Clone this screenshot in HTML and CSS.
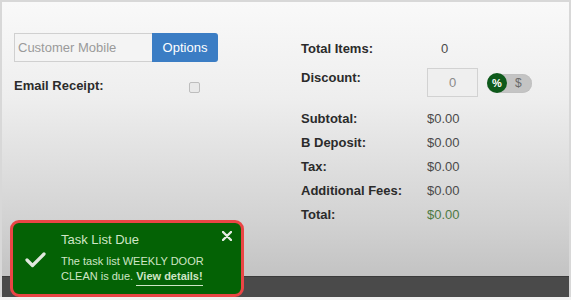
FILE: index.html
```html
<!DOCTYPE html>
<html>
<head>
<meta charset="utf-8">
<link rel="stylesheet" href="styles.css">
</head>
<body>
<div class="frame">
  <div class="content">
    <div class="left">
      <div class="mobile-group">
        <input class="mobile-input" type="text" placeholder="Customer Mobile">
        <button class="options-btn">Options</button>
      </div>
      <div class="email-row">
        <span class="label">Email Receipt:</span>
        <span class="checkbox"></span>
      </div>
    </div>
    <div class="right">
      <div class="row first">
        <span class="label">Total Items:</span>
        <span class="value count">0</span>
      </div>
      <div class="row discount">
        <span class="label">Discount:</span>
        <div class="discount-controls">
          <div class="discount-box">0</div>
          <div class="toggle"><span class="knob">%</span><span class="dollar">$</span></div>
        </div>
      </div>
      <div class="row"><span class="label">Subtotal:</span><span class="value">$0.00</span></div>
      <div class="row"><span class="label">B Deposit:</span><span class="value">$0.00</span></div>
      <div class="row"><span class="label">Tax:</span><span class="value">$0.00</span></div>
      <div class="row"><span class="label">Additional Fees:</span><span class="value">$0.00</span></div>
      <div class="row"><span class="label">Total:</span><span class="value total">$0.00</span></div>
    </div>
  </div>
  <div class="footer"></div>
</div>
<div class="toast">
  <div class="toast-icon">
    <svg width="21" height="17" viewBox="0 0 21 17"><polyline points="2,9 7.5,14.5 19,3" fill="none" stroke="#e2e8df" stroke-width="3.2" stroke-linecap="round" stroke-linejoin="round"/></svg>
  </div>
  <div class="toast-body">
    <div class="toast-title">Task List Due</div>
    <div class="toast-text">The task list WEEKLY DOOR<br>CLEAN is due. <span class="toast-link">View details!</span></div>
  </div>
  <div class="toast-close">
    <svg width="10" height="10" viewBox="0 0 10 10"><path d="M1 1 L9 9 M9 1 L1 9" stroke="#e6ece4" stroke-width="2.4" stroke-linecap="round"/></svg>
  </div>
</div>
</body>
</html>
```
FILE: styles.css
```css
html, body {
  margin: 0;
  padding: 0;
  background: #f2f2f2;
  font-family: "Liberation Sans", Arial, sans-serif;
}
.frame {
  width: 567px;
  height: 295px;
  border-top: 2px solid #d8d8d8;
  border-left: 2px solid #d8d8d8;
  border-right: 2px solid #d8d8d8;
  display: flex;
  flex-direction: column;
}
.content {
  flex: 1;
  background: linear-gradient(#f9f9f9 0%, #eeeeee 35%, #d2d2d2 80%, #c3c3c3 100%);
  display: grid;
  grid-template-columns: 287px 1fr;
  padding-left: 12px;
}
.left {
  padding-top: 31px;
}
.mobile-group {
  display: flex;
  height: 29px;
}
.mobile-input {
  box-sizing: border-box;
  width: 138px;
  height: 29px;
  border: 1px solid #d0d0d0;
  border-right: none;
  background: #f4f4f4;
  padding: 0 3px;
  font-family: "Liberation Sans", Arial, sans-serif;
  font-size: 13px;
  color: #555;
  outline: none;
}
.mobile-input::placeholder { color: #9a9a9a; }
.options-btn {
  box-sizing: border-box;
  width: 66px;
  height: 29px;
  border: none;
  border-radius: 0 3px 3px 0;
  background: #3b7dc4;
  color: #ffffff;
  font-family: "Liberation Sans", Arial, sans-serif;
  font-size: 13px;
  padding: 0;
}
.email-row {
  display: flex;
  align-items: center;
  margin-top: 14px;
  height: 18px;
}
.label {
  font-weight: bold;
  font-size: 13px;
  color: #2b2b2b;
}
.email-row .label { width: 175px; }
.checkbox {
  box-sizing: border-box;
  width: 11px;
  height: 11px;
  border: 1px solid #bdbdbd;
  border-radius: 2px;
  background: #e9e9e9;
  margin-top: 4px;
}
.right {
  padding-top: 34px;
  display: flex;
  flex-direction: column;
}
.row {
  display: flex;
  align-items: center;
  height: 24px;
}
.row .label { width: 126px; }
.value {
  font-size: 13px;
  color: #4a4a4a;
}
.value.count { padding-left: 14px; }
.value.total { color: #4d7a44; }
.row.discount {
  height: 46px;
  align-items: flex-start;
  padding-top: 8px;
  box-sizing: border-box;
}
.row.discount .label { padding-top: 2px; }
.discount-controls {
  display: flex;
  align-items: center;
}
.discount-box {
  box-sizing: border-box;
  width: 51px;
  height: 29px;
  border: 1px solid #d2d2d2;
  background: #efefef;
  font-size: 13px;
  color: #8a8a8a;
  display: flex;
  align-items: center;
  justify-content: center;
}
.toggle {
  margin-left: 9px;
  margin-top: 1px;
  width: 45px;
  height: 19px;
  border-radius: 10px;
  background: #c4c4c4;
  display: flex;
  align-items: center;
  box-shadow: inset 0 0 1px #aaa;
}
.knob {
  width: 20px;
  height: 20px;
  border-radius: 50%;
  background: #0e5a1b;
  color: #ffffff;
  font-size: 11px;
  font-weight: bold;
  display: flex;
  align-items: center;
  justify-content: center;
}
.dollar {
  margin-left: 8px;
  font-size: 12px;
  color: #6a6a6a;
}
.footer {
  height: 21px;
  background: #4a4a4a;
  border-top: 1px solid #3a3a3a;
  box-sizing: border-box;
}
.toast {
  position: absolute;
  left: 10px;
  top: 220px;
  width: 234px;
  height: 77px;
  box-sizing: border-box;
  border: 3px solid #ea4545;
  border-radius: 9px;
  background: #046205;
  display: flex;
}
.toast-icon {
  width: 44px;
  display: flex;
  align-items: center;
  justify-content: center;
  padding-top: 2px;
}
.toast-body {
  padding-top: 9px;
  padding-left: 4px;
}
.toast-title {
  font-size: 13px;
  color: #cfe6c6;
  line-height: 16px;
}
.toast-text {
  margin-top: 6px;
  font-size: 11px;
  line-height: 15px;
  color: #cfe6c6;
}
.toast-link {
  font-weight: bold;
  display: inline-block;
  border-bottom: 1px solid #cfe6c6;
  padding-bottom: 2px;
  line-height: 13px;
}
.toast-close {
  position: absolute;
  right: 9px;
  top: 4px;
}
```
